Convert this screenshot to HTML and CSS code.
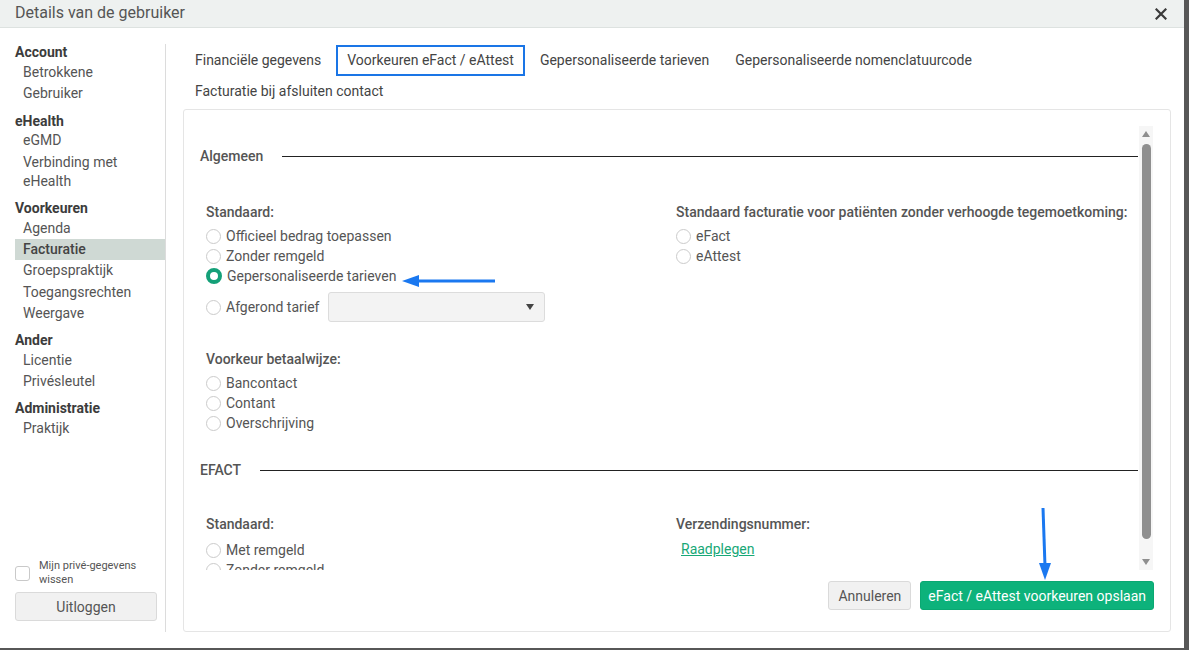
FILE: index.html
```html
<!DOCTYPE html>
<html lang="nl">
<head>
    <meta charset="UTF-8">
    <meta name="viewport" content="width=device-width, initial-scale=1.0">
    <title>Details van de gebruiker</title>
    <link rel="stylesheet" href="styles.css">
</head>
<body>
    <div class="dialog">
        <div class="dialog-header">
            <span class="dialog-title">Details van de gebruiker</span>
            <button class="close" aria-label="Sluiten">
                <svg width="12" height="12" viewBox="0 0 12 12"><path d="M1.5 1.5 L10.5 10.5 M10.5 1.5 L1.5 10.5" stroke="#3a3a3a" stroke-width="2.2" stroke-linecap="square"/></svg>
            </button>
        </div>

        <div class="dialog-body">
            <nav class="sidebar">
                <div class="menu">
                    <div class="menu-group">Account</div>
                    <a class="menu-item">Betrokkene</a>
                    <a class="menu-item">Gebruiker</a>
                    <div class="menu-group">eHealth</div>
                    <a class="menu-item">eGMD</a>
                    <a class="menu-item">Verbinding met eHealth</a>
                    <div class="menu-group">Voorkeuren</div>
                    <a class="menu-item">Agenda</a>
                    <a class="menu-item active">Facturatie</a>
                    <a class="menu-item">Groepspraktijk</a>
                    <a class="menu-item">Toegangsrechten</a>
                    <a class="menu-item">Weergave</a>
                    <div class="menu-group">Ander</div>
                    <a class="menu-item">Licentie</a>
                    <a class="menu-item">Privésleutel</a>
                    <div class="menu-group">Administratie</div>
                    <a class="menu-item">Praktijk</a>
                </div>
                <div class="sidebar-bottom">
                    <label class="check">
                        <span class="checkbox"></span>
                        <span class="check-label">Mijn privé-gegevens wissen</span>
                    </label>
                    <button class="btn btn-light logout">Uitloggen</button>
                </div>
            </nav>

            <main class="content">
                <div class="tabs">
                    <span class="tab">Financiële gegevens</span>
                    <span class="tab active">Voorkeuren eFact / eAttest</span>
                    <span class="tab">Gepersonaliseerde tarieven</span>
                    <span class="tab">Gepersonaliseerde nomenclatuurcode</span>
                    <span class="tab">Facturatie bij afsluiten contact</span>
                </div>

                <div class="panel">
                    <div class="panel-scroll">
                        <div class="scroll-content">
                            <div class="section-title"><span>Algemeen</span><span class="rule"></span></div>

                            <div class="form-row first">
                                <div class="col">
                                    <div class="group-label">Standaard:</div>
                                    <div class="radio"><span class="dot"></span>Officieel bedrag toepassen</div>
                                    <div class="radio"><span class="dot"></span>Zonder remgeld</div>
                                    <div class="radio"><span class="dot checked"></span>Gepersonaliseerde tarieven</div>
                                    <div class="radio select-row"><span class="dot"></span>Afgerond tarief
                                        <div class="select"><span class="caret"></span></div>
                                    </div>

                                    <div class="group-label spaced">Voorkeur betaalwijze:</div>
                                    <div class="radio"><span class="dot"></span>Bancontact</div>
                                    <div class="radio"><span class="dot"></span>Contant</div>
                                    <div class="radio"><span class="dot"></span>Overschrijving</div>
                                </div>
                                <div class="col">
                                    <div class="group-label">Standaard facturatie voor patiënten zonder verhoogde tegemoetkoming:</div>
                                    <div class="radio"><span class="dot"></span>eFact</div>
                                    <div class="radio"><span class="dot"></span>eAttest</div>
                                </div>
                            </div>

                            <div class="section-title second"><span>EFACT</span><span class="rule"></span></div>

                            <div class="form-row efact">
                                <div class="col">
                                    <div class="group-label">Standaard:</div>
                                    <div class="radio"><span class="dot"></span>Met remgeld</div>
                                    <div class="radio"><span class="dot"></span>Zonder remgeld</div>
                                    <div class="radio"><span class="dot"></span>Met remgeld (derde betaler)</div>
                                </div>
                                <div class="col">
                                    <div class="group-label">Verzendingsnummer:</div>
                                    <a class="link">Raadplegen</a>
                                </div>
                            </div>
                        </div>
                        <div class="scrollbar">
                            <span class="arrow up"></span>
                            <span class="thumb"></span>
                            <span class="arrow down"></span>
                        </div>
                    </div>
                    <div class="panel-footer">
                        <button class="btn btn-light">Annuleren</button>
                        <button class="btn btn-primary">eFact / eAttest voorkeuren opslaan</button>
                    </div>
                </div>
            </main>
        </div>

        <svg class="annotations" width="1184" height="648" viewBox="0 0 1184 648">
            <line x1="495" y1="281" x2="414" y2="281" stroke="#1a78f0" stroke-width="3"/>
            <polygon points="402,281 419,275 419,287" fill="#1a78f0"/>
            <line x1="1043" y1="508" x2="1045" y2="566" stroke="#1a78f0" stroke-width="3"/>
            <polygon points="1045,580 1039,563 1051,563" fill="#1a78f0"/>
        </svg>
    </div>
</body>
</html>
```

FILE: styles.css
```css
body {
    margin: 0;
    background: #575757;
    font-family: Roboto, "Liberation Sans", Arial, sans-serif;
    font-size: 14px;
    color: #555;
}
.dialog {
    position: relative;
    width: 1184px;
    height: 648px;
    background: #fff;
    display: flex;
    flex-direction: column;
    overflow: hidden;
}
.dialog-header {
    height: 27px;
    background: #eef1f0;
    border-bottom: 1px solid #dde2e0;
    display: flex;
    align-items: center;
    justify-content: space-between;
    padding: 0 17px 0 15px;
}
.dialog-title {
    font-size: 16px;
    color: #555;
    margin-top: -2px;
}
.close {
    border: 0;
    background: none;
    padding: 0;
    width: 12px;
    height: 12px;
    display: flex;
}
.dialog-body {
    flex: 1;
    display: flex;
    padding: 16px 0 16px 0;
    min-height: 0;
}

/* sidebar */
.sidebar {
    width: 150px;
    padding-left: 15px;
    border-right: 1px solid #dcdcdc;
    display: flex;
    flex-direction: column;
    justify-content: space-between;
}
.menu-group {
    font-weight: bold;
    color: #3c3c3c;
    line-height: 17.7px;
    margin-top: 8px;
}
.menu-group:first-child {
    margin-top: 0;
    padding-top: 0.3px;
}
.menu-item {
    display: block;
    padding: 1.15px 8px;
    line-height: 19px;
    color: #555;
}
.menu-item.active {
    background: #cfd9d4;
    font-weight: 500;
    color: #444;
}
.sidebar-bottom {
    padding-right: 8px;
    padding-bottom: 11px;
}
.check {
    display: flex;
    align-items: center;
    gap: 9px;
    margin-bottom: 5px;
}
.checkbox {
    width: 13px;
    height: 13px;
    border: 1px solid #c9c9c9;
    border-radius: 3px;
    flex: none;
}
.check-label {
    font-size: 11px;
    line-height: 14px;
    color: #555;
}
.btn {
    font-family: inherit;
    font-size: 14px;
    height: 29px;
    padding: 0 9px;
    border-radius: 3px;
    cursor: pointer;
}
.btn-light {
    background: #f1f1f1;
    border: 1px solid #dadada;
    color: #555;
}
.btn-primary {
    background: #0db27b;
    border: 1px solid #0aa872;
    color: #fff;
    padding: 0 7px;
}
.logout {
    width: 100%;
    height: 29px;
}

/* main */
.content {
    flex: 1;
    display: flex;
    flex-direction: column;
    padding: 0 13px 0 17px;
    min-width: 0;
}
.tabs {
    display: flex;
    flex-wrap: wrap;
    padding-left: 1px;
    margin-top: 1px;
}
.tab {
    height: 31px;
    line-height: 27px;
    padding: 0 9px;
    margin-right: 4px;
    border: 2px solid transparent;
    color: #444;
    box-sizing: border-box;
}
.tab.active {
    border-color: #1a75e6;
}
.panel {
    flex: 1;
    margin-top: 2px;
    border: 1px solid #e5e5e5;
    border-radius: 3px;
    display: flex;
    flex-direction: column;
    min-height: 0;
}
.panel-scroll {
    flex: 1;
    display: flex;
    margin-top: 16px;
    padding-right: 17px;
    min-height: 0;
}
.scroll-content {
    flex: 1;
    overflow: hidden;
    padding: 20px 0 0 16px;
}
.section-title {
    display: flex;
    align-items: center;
    gap: 19px;
    line-height: 20px;
    color: #555;
    font-weight: 500;
}
.section-title.second {
    margin-top: 27px;
}
.rule {
    flex: 1;
    height: 1px;
    background: #222;
    margin-right: 1px;
}
.form-row {
    display: grid;
    grid-template-columns: 470px 1fr;
    margin-left: 6px;
    margin-top: 36px;
}
.form-row.efact {
    margin-top: 34px;
}
.group-label {
    line-height: 20px;
    font-weight: 500;
    margin-bottom: 4px;
    color: #555;
}
.efact .group-label {
    margin-bottom: 6px;
}
.group-label.spaced {
    margin-top: 27px;
}
.radio {
    display: flex;
    align-items: center;
    height: 20px;
    gap: 5px;
    color: #555;
}
.dot {
    width: 13px;
    height: 13px;
    border: 1.5px solid #cbcbcb;
    border-radius: 50%;
    background: #fff;
    flex: none;
}
.dot.checked {
    width: 8px;
    height: 8px;
    border: 4px solid #14a078;
}
.radio.select-row {
    height: 30px;
    margin-top: 6px;
}
.select {
    width: 215px;
    height: 28px;
    margin-left: 4px;
    background: #f3f3f3;
    border: 1px solid #dcdcdc;
    border-radius: 3px;
    position: relative;
}
.caret {
    position: absolute;
    right: 10px;
    top: 11px;
    border-left: 4px solid transparent;
    border-right: 4px solid transparent;
    border-top: 6px solid #444;
}
.link {
    display: inline-block;
    margin-left: 5px;
    margin-top: -1px;
    color: #18a877;
    text-decoration: underline;
    line-height: 20px;
}

/* fake scrollbar */
.scrollbar {
    width: 14px;
    background: #f6f6f6;
    display: flex;
    flex-direction: column;
    align-items: center;
}
.arrow {
    width: 0;
    height: 0;
    border-left: 4.5px solid transparent;
    border-right: 4.5px solid transparent;
}
.arrow.up {
    border-bottom: 6px solid #8f8f8f;
    margin-top: 5px;
}
.arrow.down {
    border-top: 6px solid #8f8f8f;
    margin-top: auto;
    margin-bottom: 5px;
}
.thumb {
    width: 9px;
    height: 395px;
    margin-top: 7px;
    background: #8f8f8f;
    border-radius: 5px;
}
.panel-footer {
    display: flex;
    justify-content: flex-end;
    gap: 9px;
    margin-top: 11px;
    padding: 0 16px 21px 0;
}
.panel-footer .btn {
    height: 29px;
}

.annotations {
    position: absolute;
    left: 0;
    top: 0;
    pointer-events: none;
}
```
